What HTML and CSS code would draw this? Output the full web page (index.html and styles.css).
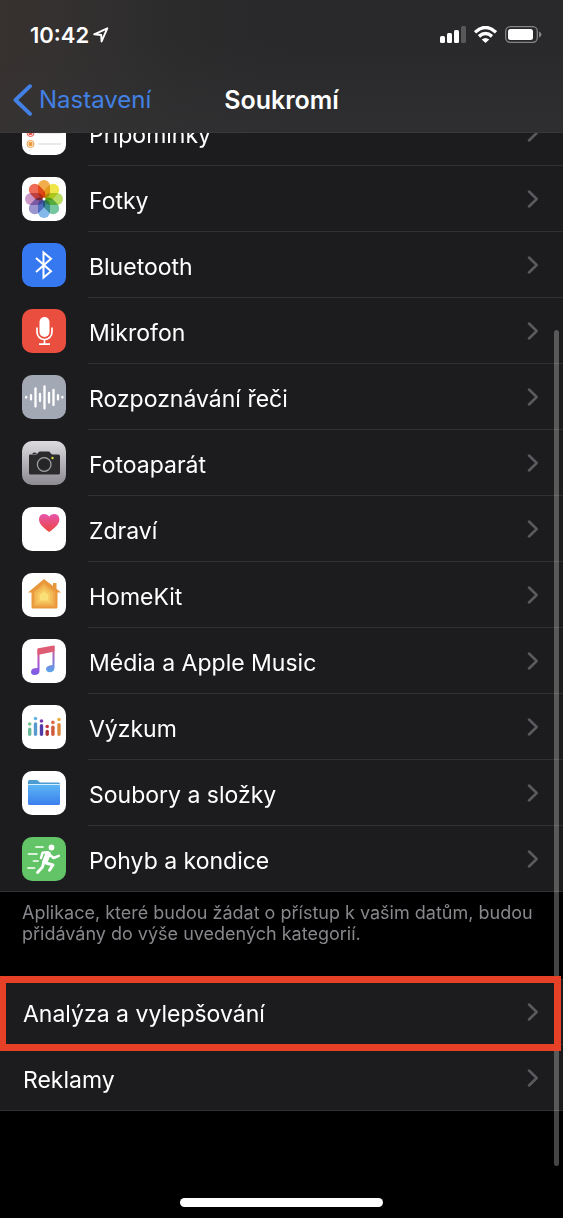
FILE: index.html
```html
<!DOCTYPE html>
<html lang="cs">
<head>
<meta charset="utf-8">
<meta name="viewport" content="width=device-width, initial-scale=1">
<title>Soukromí</title>
<link rel="stylesheet" href="styles.css">
</head>
<body>
<div class="screen">
  <header class="header">
    <div class="status">
      <div class="clock">
        <time>10:42</time>
        <svg width="16" height="16" viewBox="0 0 16 16" aria-hidden="true"><path d="M1.2 7.3 14.3 1.3 8.6 14.4 8.2 8z" fill="none" stroke="#fff" stroke-width="1.9" stroke-linejoin="round"/></svg>
      </div>
      <div class="indicators">
        <svg width="26" height="17" viewBox="0 0 26 17" aria-hidden="true"><g fill="#fff"><rect y="10" width="5" height="7" rx="1.5"/><rect x="7" y="7" width="5" height="10" rx="1.5"/><rect x="14" y="4" width="5" height="13" rx="1.5"/><rect x="21" width="5" height="17" rx="1.5" opacity=".22"/></g></svg>
        <svg width="23" height="17" viewBox="0 0 23 17" aria-hidden="true"><g fill="none" stroke="#fff" stroke-width="3.4"><path d="M1 6.3Q11.500-3.300 22 6.300"/><path d="M5 10.400Q11.500 4.700 18 10.400"/></g><path d="M7.700 13.500Q11.500 10.400 15.300 13.500L11.500 17z" fill="#fff"/></svg>
        <svg width="37" height="17" viewBox="0 0 37 17" aria-hidden="true"><rect x=".7" y=".7" width="31.600" height="15.600" rx="4.500" fill="none" stroke="#858586" stroke-width="1.300"/><rect x="3" y="3" width="25" height="11" rx="2.500" fill="#fff"/><path d="M34 5.500q2.500 1 2.500 3t-2.500 3z" fill="#858586"/></svg>
      </div>
    </div>
    <nav class="nav">
      <a class="back" href="#nastaveni"><svg width="20" height="32" viewBox="0 0 20 32" aria-hidden="true"><path d="M17 2.200 2.500 16 17 29.800" fill="none" stroke="currentColor" stroke-width="3.900" stroke-linecap="round" stroke-linejoin="round"/></svg>Nastavení</a>
      <h1 class="title">Soukromí</h1>
    </nav>
  </header>

  <main class="content">
    <div class="group group-apps">
      <a class="row" href="#pripominky"><svg class="icon" viewBox="0 0 44 44"><rect width="44" height="44" rx="10" fill="#fff"/><g stroke="#d5d5d7"><path d="M16 11H39M16 22H39M16 33H39"/></g><g fill="none" stroke-width="1"><circle cx="8.500" cy="11" r="3.500" stroke="#3b82f6"/><circle cx="8.500" cy="22" r="3.500" stroke="#e9534a"/><circle cx="8.500" cy="33" r="3.500" stroke="#eb9a3d"/></g><circle cx="8.500" cy="11" r="2.200" fill="#3b82f6"/><circle cx="8.500" cy="22" r="2.200" fill="#e9534a"/><circle cx="8.500" cy="33" r="2.200" fill="#eb9a3d"/></svg><span class="label">Připomínky</span><svg class="chevron" viewBox="0 0 12 18"><path d="M2 1.500 9.700 9 2 16.500"/></svg></a>

      <a class="row" href="#fotky"><svg class="icon" viewBox="0 0 44 44"><rect width="44" height="44" rx="10" fill="#fff"/><g class="petals"><rect x="16" y="3" width="12" height="18.500" rx="6" fill="#f3ac4c"/><rect x="16" y="3" width="12" height="18.500" rx="6" fill="#efe64c" transform="rotate(45 22 22)"/><rect x="16" y="3" width="12" height="18.500" rx="6" fill="#b9dc62" transform="rotate(90 22 22)"/><rect x="16" y="3" width="12" height="18.500" rx="6" fill="#76c6a0" transform="rotate(135 22 22)"/><rect x="16" y="3" width="12" height="18.500" rx="6" fill="#84b8ea" transform="rotate(180 22 22)"/><rect x="16" y="3" width="12" height="18.500" rx="6" fill="#9a95cf" transform="rotate(225 22 22)"/><rect x="16" y="3" width="12" height="18.500" rx="6" fill="#cb98c8" transform="rotate(270 22 22)"/><rect x="16" y="3" width="12" height="18.500" rx="6" fill="#ee6c55" transform="rotate(315 22 22)"/></g><circle cx="22" cy="22" r="1.500" fill="#fff"/></svg><span class="label">Fotky</span><svg class="chevron" viewBox="0 0 12 18"><path d="M2 1.500 9.700 9 2 16.500"/></svg></a>

      <a class="row" href="#bluetooth"><svg class="icon" viewBox="0 0 44 44"><rect width="44" height="44" rx="10" fill="#3578f0"/><path d="M14 15 29 28.200 21.500 34.500V9.500L29 15.800 14 29" fill="none" stroke="#fff" stroke-width="2"/></svg><span class="label">Bluetooth</span><svg class="chevron" viewBox="0 0 12 18"><path d="M2 1.500 9.700 9 2 16.500"/></svg></a>

      <a class="row" href="#mikrofon"><svg class="icon" viewBox="0 0 44 44"><rect width="44" height="44" rx="10" fill="#e94e3f"/><rect x="17.500" y="8" width="10" height="20" rx="5" fill="#fff"/><path d="M15 18.500V23a7.500 7.500 0 0 0 15 0V18.500M22.500 30.500V35M17 35.200H28" fill="none" stroke="#fff" stroke-width="1.700"/></svg><span class="label">Mikrofon</span><svg class="chevron" viewBox="0 0 12 18"><path d="M2 1.500 9.700 9 2 16.500"/></svg></a>

      <a class="row" href="#rec"><svg class="icon" viewBox="0 0 44 44"><rect width="44" height="44" rx="10" fill="#a2a8b4"/><path d="M4.200 22V22.600M9 20.200V24.400M13.500 13.500V31.500M18 19V26M22.500 11.500V33.500M27 18V27.500M31.500 15V30M36 20.200V24.400M40.400 22V22.600" stroke="#fff" stroke-width="2.300" stroke-linecap="round"/></svg><span class="label">Rozpoznávání řeči</span><svg class="chevron" viewBox="0 0 12 18"><path d="M2 1.500 9.700 9 2 16.500"/></svg></a>

      <a class="row" href="#fotoaparat"><svg class="icon" viewBox="0 0 44 44"><defs><linearGradient id="silver" x2="0" y2="1"><stop stop-color="#dddbe0"/><stop offset="1" stop-color="#8d8b91"/></linearGradient></defs><rect width="44" height="44" rx="10" fill="url(#silver)"/><path d="M10.500 12.200Q12.500 10.800 14.500 12.200V13H10.500z" fill="#2b2b2d"/><path d="M8 13.500H13.500Q15 13.500 16 12L16.500 11.300Q17 10.500 18 10.500H26.500Q27.500 10.500 28 11.300L28.500 12Q29.500 13.500 31 13.500H36.500Q38 13.500 38 15V32Q38 33.500 36.500 33.500H8.500Q7 33.500 7 32V14.500Q7 13.500 8 13.500z" fill="#2b2b2d"/><circle cx="22.200" cy="23.500" r="6.800" fill="none" stroke="#a5a4a9" stroke-width="1.200"/><circle cx="22.200" cy="23.500" r="5" fill="#252527"/><circle cx="30.500" cy="17" r="1.200" fill="#d6dc32"/></svg><span class="label">Fotoaparát</span><svg class="chevron" viewBox="0 0 12 18"><path d="M2 1.500 9.700 9 2 16.500"/></svg></a>

      <a class="row" href="#zdravi"><svg class="icon" viewBox="0 0 44 44"><defs><linearGradient id="heart" x2="0" y2="1"><stop stop-color="#e656ac"/><stop offset="1" stop-color="#ec4640"/></linearGradient></defs><rect width="44" height="44" rx="10" fill="#fff"/><path d="M27.200 25C22.500 21.500 17 17.300 17 12.500C17 9.200 19.200 7 22 7C24.400 7 26.200 8 27.200 9.800C28.200 8 30 7 32.300 7C35.200 7 37.400 9.200 37.400 12.500C37.400 17.300 32 21.500 27.200 25z" fill="url(#heart)"/></svg><span class="label">Zdraví</span><svg class="chevron" viewBox="0 0 12 18"><path d="M2 1.500 9.700 9 2 16.500"/></svg></a>

      <a class="row" href="#homekit"><svg class="icon" viewBox="0 0 44 44"><rect width="44" height="44" rx="10" fill="#fff"/><path d="M22 6 31 13V10H34.500V15.700L39 19.500H35.500V34Q35.500 35.500 34 35.500H11Q9.500 35.500 9.500 34V19.500H6z" fill="#e8973a"/><path d="M22 10.200 33.300 19V33.500H11.700V19z" fill="#f0a94a"/><path d="M22 12.500 31 19.500V31.500H13V19.500z" fill="#f3b954"/><path d="M22 15.500 28.500 20.500V29.500H15.500V20.500z" fill="#f6ca60"/><path d="M22 18.500 26.200 21.800V27.500H17.800V21.800z" fill="#fae078"/></svg><span class="label">HomeKit</span><svg class="chevron" viewBox="0 0 12 18"><path d="M2 1.500 9.700 9 2 16.500"/></svg></a>

      <a class="row" href="#media"><svg class="icon" viewBox="0 0 44 44"><defs><linearGradient id="noteleft" x2="0" y2="1"><stop stop-color="#e75a73"/><stop offset=".55" stop-color="#a954d4"/><stop offset="1" stop-color="#775ee9"/></linearGradient><linearGradient id="noteright" x2="0" y2="1"><stop stop-color="#db5b86"/><stop offset=".55" stop-color="#8b70cf"/><stop offset="1" stop-color="#58a9ef"/></linearGradient></defs><rect width="44" height="44" rx="10" fill="#fff"/><path d="M15.500 10H17.500V32C17.500 34.500 15.500 36 12.500 36C10.300 36 9 34.800 9 33C9 30.700 10.700 29.500 13 29.300L15.500 29z" fill="url(#noteleft)"/><path d="M30.500 7H32.500V29C32.500 31.500 30.500 33.200 27.800 33.200C25.500 33.200 24 32 24 30C24 27.900 25.700 26.700 28 26.400L30.500 26z" fill="url(#noteright)"/><path d="M15.500 10.200Q15.500 9.500 16.300 9.300L31.500 6.500Q32.500 6.300 32.500 7.300V12.500L15.500 16z" fill="#df5c75"/></svg><span class="label">Média a Apple Music</span><svg class="chevron" viewBox="0 0 12 18"><path d="M2 1.500 9.700 9 2 16.500"/></svg></a>

      <a class="row" href="#vyzkum"><svg class="icon" viewBox="0 0 44 44"><rect width="44" height="44" rx="10" fill="#fff"/><g fill="none" stroke-width="3.400" stroke-linecap="round"><path d="M7.700 24.200V29.300" stroke="#69b99c"/><path d="M13.500 19V29.300" stroke="#5999ce"/><path d="M19.500 20.700V29.300" stroke="#513ba9"/><path d="M25.200 26.500V29.300" stroke="#ae3435"/><path d="M30.900 22.300V29.300" stroke="#cf5a3c"/><path d="M37 19.700V29.300" stroke="#db873c"/></g><circle cx="7.700" cy="19" r="1.800" fill="#70c68c"/><circle cx="13.500" cy="13.500" r="1.800" fill="#65b5e3"/><circle cx="19.500" cy="16" r="1.800" fill="#7938b0"/><circle cx="25.200" cy="21.500" r="1.800" fill="#c53947"/><circle cx="30.900" cy="17.400" r="1.800" fill="#df6846"/><circle cx="37" cy="14.500" r="1.800" fill="#edae40"/></svg><span class="label">Výzkum</span><svg class="chevron" viewBox="0 0 12 18"><path d="M2 1.500 9.700 9 2 16.500"/></svg></a>

      <a class="row" href="#soubory"><svg class="icon" viewBox="0 0 44 44"><defs><linearGradient id="folder" x2="0" y2="1"><stop stop-color="#5cb5f4"/><stop offset="1" stop-color="#3b7fed"/></linearGradient></defs><rect width="44" height="44" rx="10" fill="#fff"/><path d="M6 12V10.500Q6 9 7.500 9H14.500Q15.500 9 16.500 10.200T19 11.500H36.500Q38 11.500 38 13V16H6z" fill="#4b9cd3"/><path d="M6 13H38V14.300H6z" fill="#d4efff"/><path d="M6 14H38V32.500Q38 34 36.500 34H7.500Q6 34 6 32.500z" fill="url(#folder)"/></svg><span class="label">Soubory a složky</span><svg class="chevron" viewBox="0 0 12 18"><path d="M2 1.500 9.700 9 2 16.500"/></svg></a>

      <a class="row" href="#pohyb"><svg class="icon" viewBox="0 0 44 44"><rect width="44" height="44" rx="10" fill="#62c466"/><circle cx="29.500" cy="10.500" r="2.900" fill="#fff"/><g fill="none" stroke="#fff" stroke-linecap="round" stroke-linejoin="round"><path d="M14 10H21M6.500 17H15M11.500 24H16M6 31H12.500" stroke-width="1.700"/><path d="M26 17 23 24.500" stroke-width="5.500"/><path d="M25.500 15.200 20.500 15.800 19 21M27.500 17.500 31.500 21 36.800 18.800" stroke-width="2.500"/><path d="M24 26 31 28 27.500 33.200M21.500 26 20.500 30 15.500 35.500" stroke-width="2.900"/></g></svg><span class="label">Pohyb a kondice</span><svg class="chevron" viewBox="0 0 12 18"><path d="M2 1.500 9.700 9 2 16.500"/></svg></a>
    </div>

    <p class="note">Aplikace, které budou žádat o přístup k vašim datům, budou přidávány do výše uvedených kategorií.</p>

    <div class="group group-more">
      <a class="row highlighted" href="#analyza"><span class="label">Analýza a vylepšování</span><svg class="chevron" viewBox="0 0 12 18"><path d="M2 1.500 9.700 9 2 16.500"/></svg></a>
      <a class="row" href="#reklamy"><span class="label">Reklamy</span><svg class="chevron" viewBox="0 0 12 18"><path d="M2 1.500 9.700 9 2 16.500"/></svg></a>
    </div>
  </main>
  <div class="scrollbar"></div>
  <footer class="home"><div class="home-bar"></div></footer>
</div>
</body>
</html>
```
FILE: styles.css
```css
* { box-sizing: border-box; }

body {
  margin: 0;
  background: #000;
  color: #fff;
  font-family: Inter, "Liberation Sans", sans-serif;
  font-size: 23px;
  line-height: 32px;
}

a { color: inherit; text-decoration: none; }
svg { display: block; flex: none; }

.screen {
  position: relative;
  display: flex;
  flex-direction: column;
  min-height: 100vh;
}

.header {
  position: relative;
  z-index: 2;
  border-bottom: 1px solid #38383a;
  background:
    linear-gradient(to bottom, rgba(48, 48, 50, 0) 30%, rgba(52, 52, 54, .5)),
    linear-gradient(to right, #37312f 0, #343130 60px, #2b2b2c 180px, #29292b 290px);
}

.status {
  display: flex;
  align-items: center;
  justify-content: space-between;
  height: 66px;
  padding: 3px 21px 0 30px;
}

.clock { display: flex; align-items: center; gap: 4px; font-size: 22px; font-weight: 600; }
.indicators { display: flex; align-items: center; gap: 8px; }

.nav {
  display: grid;
  grid-template-columns: 1fr auto 1fr;
  align-items: center;
  height: 66px;
  padding: 2px 13px 0;
}

.back { display: flex; align-items: center; gap: 6px; color: #4380e4; font-size: 24px; }
.title { margin: 0; font-size: 25px; font-weight: 600; line-height: 32px; }

.group { background: #1c1c1e; box-shadow: inset 0 -1px #303032; }
.group-apps { margin-top: -33px; }
.group-more { box-shadow: inset 0 1px #303032, inset 0 -1px #303032; }

.row {
  position: relative;
  display: flex;
  align-items: center;
  height: 66px;
  padding-left: 22px;
}

.icon { width: 44px; height: 44px; margin-right: 22px; }
.petals rect { mix-blend-mode: multiply; }
.petals { isolation: isolate; }

.label {
  display: flex;
  flex: 1;
  align-items: center;
  align-self: stretch;
  padding: 4px 0 0 1px;
  border-bottom: 1px solid #303032;
}

.row:last-child .label { border-bottom-color: transparent; }

.chevron {
  position: absolute;
  top: 24px;
  right: 24px;
  width: 12px;
  height: 18px;
  fill: none;
  stroke: #5b5b5f;
  stroke-width: 2.5px;
  stroke-linecap: round;
  stroke-linejoin: round;
}

.note {
  margin: 0;
  padding: 10px 22px 35px;
  color: #87878c;
  font-size: 18px;
  line-height: 21px;
}

.highlighted::after {
  content: "";
  position: absolute;
  z-index: 3;
  inset: -3px 2px -6px 0;
  border: 7px solid #e64027;
  border-left-width: 6px;
}

.scrollbar {
  position: absolute;
  top: 330px;
  right: 4px;
  bottom: 52px;
  z-index: 1;
  width: 5px;
  border-radius: 3px;
  background: rgba(255, 255, 255, .27);
}

.home { display: flex; justify-content: center; margin-top: auto; padding-bottom: 11px; }
.home-bar { width: 36%; height: 9px; border-radius: 5px; background: #fff; }
```
